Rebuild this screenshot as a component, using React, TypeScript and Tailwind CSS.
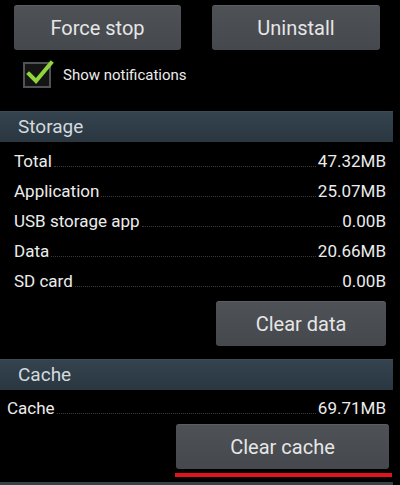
const rows = [
  { label: "Total", value: "47.32MB" },
  { label: "Application", value: "25.07MB" },
  { label: "USB storage app", value: "0.00B" },
  { label: "Data", value: "20.66MB" },
  { label: "SD card", value: "0.00B" },
];

const Button = ({ children, className }: { children: string; className: string }) => (
  <button
    className={`h-[45px] rounded-[3px] bg-gradient-to-b from-[#4e5156] to-[#45484d] text-[20px] text-[#e6e6e6] shadow-[inset_0_1px_0_rgba(255,255,255,0.08)] ${className}`}
  >
    {children}
  </button>
);

const Header = ({ title, className = "" }: { title: string; className?: string }) => (
  <div
    className={`h-[31px] w-[393px] border-t border-[#3d4c57] bg-gradient-to-b from-[#34434e] to-[#2a3741] pl-[18px] text-[19px] leading-[29px] text-[#d3dadf] ${className}`}
  >
    {title}
  </div>
);

const Row = ({ label, value, className = "" }: { label: string; value: string; className?: string }) => (
  <div className={`flex h-[30px] items-end text-[17px] leading-[30px] text-[#ececec] ${className}`}>
    <span>{label}</span>
    <div className="mx-[2px] mb-[9px] flex-1 border-b border-dotted border-[#3a3a3a]" />
    <span>{value}</span>
  </div>
);

export default function App() {
  return (
    <div className="h-[485px] w-[400px] overflow-hidden bg-black font-['Roboto',_'Liberation_Sans',_sans-serif]">
      {/* Action buttons */}
      <div className="flex pt-[5px]">
        <Button className="ml-[14px] w-[167px]">Force stop</Button>
        <Button className="ml-[31px] w-[168px]">Uninstall</Button>
      </div>

      {/* Notifications checkbox */}
      <div className="mt-[12px] flex h-[26px] items-center pl-[23px]">
        <div className="relative h-[26px] w-[28px] border-2 border-[#505257] bg-[#141414]">
          <svg className="absolute -top-[4px] left-[1px]" width="28" height="26" viewBox="0 0 28 26">
            <path d="M3 14 L10 21 L25 3" fill="none" stroke="#8fd63c" strokeWidth="4" strokeLinecap="square" />
          </svg>
        </div>
        <span className="ml-[12px] text-[15px] text-[#ececec]">Show notifications</span>
      </div>

      {/* Storage */}
      <Header title="Storage" className="mt-[23px]" />
      <div className="mt-[4px] pl-[14px] pr-[14px]">
        {rows.map((r) => (
          <Row key={r.label} label={r.label} value={r.value} />
        ))}
      </div>
      <div className="mt-[5px] flex justify-end pr-[14px]">
        <Button className="w-[170px]">Clear data</Button>
      </div>

      {/* Cache */}
      <Header title="Cache" className="mt-[13px]" />
      <Row label="Cache" value="69.71MB" className="mt-[3px] pl-[7px] pr-[14px]" />
      <div className="mt-[1px] flex justify-end pr-[11px]">
        <Button className="w-[213px]">Clear cache</Button>
      </div>
      <div className="ml-[175px] mt-[4px] h-[4px] w-[217px] bg-[#e0141a]" />
      <div className="mt-[5px] h-[10px] w-[393px] bg-[#33414c]" />
    </div>
  );
}
